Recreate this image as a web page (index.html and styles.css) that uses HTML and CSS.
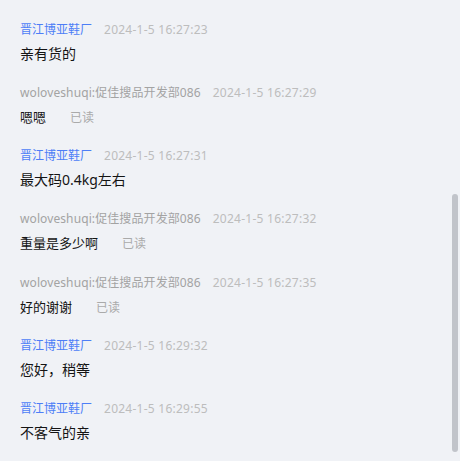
FILE: index.html
```html
<!DOCTYPE html>
<html lang="zh-CN">
<head>
<meta charset="utf-8">
<title>聊天记录</title>
<link rel="stylesheet" href="styles.css">
</head>
<body>
<div class="chat">
  <div class="msg">
    <div class="meta"><span class="name shop">晋江博亚鞋厂</span><span class="time">2024-1-5 16:27:23</span></div>
    <div class="text">亲有货的</div>
  </div>
  <div class="msg">
    <div class="meta"><span class="name user">woloveshuqi:促佳搜品开发部086</span><span class="time">2024-1-5 16:27:29</span></div>
    <div class="text mine">嗯嗯<span class="read">已读</span></div>
  </div>
  <div class="msg">
    <div class="meta"><span class="name shop">晋江博亚鞋厂</span><span class="time">2024-1-5 16:27:31</span></div>
    <div class="text">最大码0.4kg左右</div>
  </div>
  <div class="msg">
    <div class="meta"><span class="name user">woloveshuqi:促佳搜品开发部086</span><span class="time">2024-1-5 16:27:32</span></div>
    <div class="text mine">重量是多少啊<span class="read">已读</span></div>
  </div>
  <div class="msg">
    <div class="meta"><span class="name user">woloveshuqi:促佳搜品开发部086</span><span class="time">2024-1-5 16:27:35</span></div>
    <div class="text mine">好的谢谢<span class="read">已读</span></div>
  </div>
  <div class="msg">
    <div class="meta"><span class="name shop">晋江博亚鞋厂</span><span class="time">2024-1-5 16:29:32</span></div>
    <div class="text">您好，稍等</div>
  </div>
  <div class="msg">
    <div class="meta"><span class="name shop">晋江博亚鞋厂</span><span class="time">2024-1-5 16:29:55</span></div>
    <div class="text">不客气的亲</div>
  </div>
</div>
<div class="scrollbar"></div>
</body>
</html>
```
FILE: styles.css
```css
html, body {
  margin: 0;
  padding: 0;
  background: #f0f2f6;
  height: 100%;
  overflow: hidden;
}
body {
  font-family: "Noto Sans", "Noto Sans CJK SC", sans-serif;
  color: #111;
}
.chat {
  padding: 22px 20px 0 20px;
  display: flex;
  flex-direction: column;
  gap: 22.66px;
}
.msg {
  display: flex;
  flex-direction: column;
  gap: 8px;
}
.meta {
  display: flex;
  gap: 12px;
  font-size: 12px;
  line-height: 16px;
  white-space: nowrap;
}
.name.shop { color: #4d7ef7; }
.name.user { color: #a3a3a3; letter-spacing: 0.1px; }
.time { color: #bdbdbd; letter-spacing: 0.25px; }
.text {
  font-size: 14px;
  line-height: 16px;
  color: #141414;
  display: flex;
  align-items: baseline;
  gap: 24px;
}
.text.mine {
  font-size: 13px;
}
.read {
  font-size: 12px;
  color: #aaaaaa;
}
.scrollbar {
  position: absolute;
  left: 452px;
  top: 194px;
  width: 6px;
  height: 258px;
  border-radius: 3px;
  background: #c1c4ca;
}
```
